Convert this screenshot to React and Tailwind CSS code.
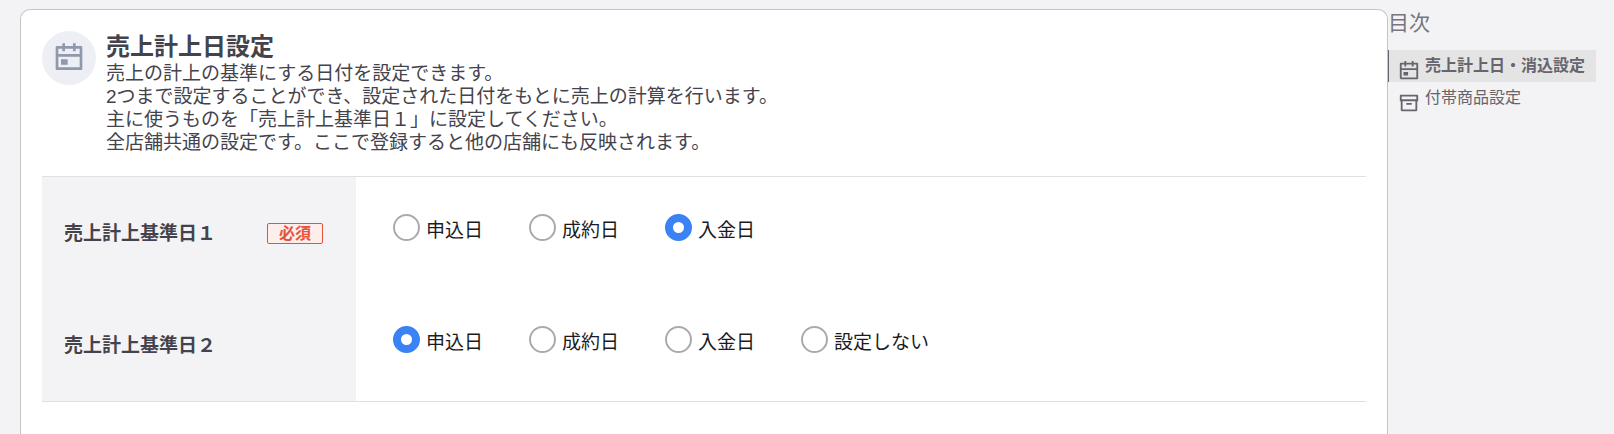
import { useState } from 'react';
import { RiArchiveLine, RiCalendarEventLine } from 'react-icons/ri';

const basisRows = [
  {
    name: 'basisDate1',
    label: '売上計上基準日１',
    required: true,
    options: ['申込日', '成約日', '入金日'],
  },
  {
    name: 'basisDate2',
    label: '売上計上基準日２',
    required: false,
    options: ['申込日', '成約日', '入金日', '設定しない'],
  },
];

const tocItems = [
  { id: 'sales-date', label: '売上計上日・消込設定', icon: RiCalendarEventLine, active: true },
  { id: 'incidental', label: '付帯商品設定', icon: RiArchiveLine, active: false },
];

function RadioOption({ name, label, checked, onChange }) {
  return (
    <label className="flex cursor-pointer items-end gap-[6px]">
      <input
        type="radio"
        name={name}
        value={label}
        checked={checked}
        onChange={onChange}
        className="h-[27px] w-[27px] shrink-0 appearance-none rounded-full border-2 border-[#aaaaae] bg-white checked:border-8 checked:border-[#3b82f6]"
      />
      <span className="text-[19px] leading-5 text-[#1c1b22]">{label}</span>
    </label>
  );
}

function BasisRow({ row, value, onSelect }) {
  return (
    <div role="radiogroup" aria-labelledby={`${row.name}-label`} className="flex min-h-[112px]">
      <div className="flex w-[314px] shrink-0 items-center justify-between bg-[#f3f3f5] pl-[22px] pr-[33px] pt-px">
        <span id={`${row.name}-label`} className="text-[19px] font-bold leading-6 text-[#44434c]">
          {row.label}
        </span>
        {row.required && (
          <span className="rounded-xs border border-[#e5533d] bg-[#fdeeec] px-[11px] text-[16px] font-bold leading-[19px] text-[#e5533d]">
            必須
          </span>
        )}
      </div>
      <div className="flex flex-1 flex-wrap items-start gap-x-[46px] gap-y-3 pl-[37px] pt-[37px]">
        {row.options.map((option) => (
          <RadioOption
            key={option}
            name={row.name}
            label={option}
            checked={value === option}
            onChange={() => onSelect(option)}
          />
        ))}
      </div>
    </div>
  );
}

export default function App() {
  const [values, setValues] = useState({ basisDate1: '入金日', basisDate2: '申込日' });

  return (
    <div className="flex min-h-screen items-stretch bg-[#f3f3f5] pl-5 pr-[18px] pt-[9px] font-['Liberation_Sans','Noto_Sans_CJK_JP',sans-serif]">
      <main
        id="sales-date"
        className="min-w-0 flex-1 rounded-t-[10px] border border-b-0 border-[#c4c4c8] bg-white px-[21px] pt-[21px]"
      >
        {/* Section heading */}
        <header className="flex items-start gap-[10px]">
          <div className="flex h-[54px] w-[54px] shrink-0 items-center justify-center rounded-full bg-[#eeeff4] text-[#8f98ad]">
            <RiCalendarEventLine className="h-8 w-8" />
          </div>
          <div className="text-[#44434c]">
            <h1 className="text-[24px] font-bold leading-[31px]">売上計上日設定</h1>
            <p className="text-[19px] leading-[23px]">
              売上の計上の基準にする日付を設定できます。
              <br />
              2つまで設定することができ、設定された日付をもとに売上の計算を行います。
              <br />
              主に使うものを「売上計上基準日１」に設定してください。
              <br />
              全店舗共通の設定です。ここで登録すると他の店舗にも反映されます。
            </p>
          </div>
        </header>

        <form className="mt-[22px] border-y border-[#e0e0e3]">
          {basisRows.map((row) => (
            <BasisRow
              key={row.name}
              row={row}
              value={values[row.name]}
              onSelect={(option) => setValues({ ...values, [row.name]: option })}
            />
          ))}
        </form>
      </main>

      {/* Table of contents */}
      <aside className="w-[208px] shrink-0 text-[#66656e]">
        <h2 className="mb-[15px] pt-[2px] text-[21px] leading-6 text-[#77767e]">目次</h2>
        <nav>
          {tocItems.map((item) => (
            <a
              key={item.id}
              href={`#${item.id}`}
              className={`flex h-8 items-end gap-[5px] border-l pl-[9px] text-[16px] leading-8 ${
                item.active ? 'border-[#66656e] bg-[#e4e4e4] font-bold' : 'border-transparent'
              }`}
            >
              <item.icon className="h-[22px] w-[22px] shrink-0" />
              <span className="whitespace-nowrap">{item.label}</span>
            </a>
          ))}
        </nav>
      </aside>
    </div>
  );
}
